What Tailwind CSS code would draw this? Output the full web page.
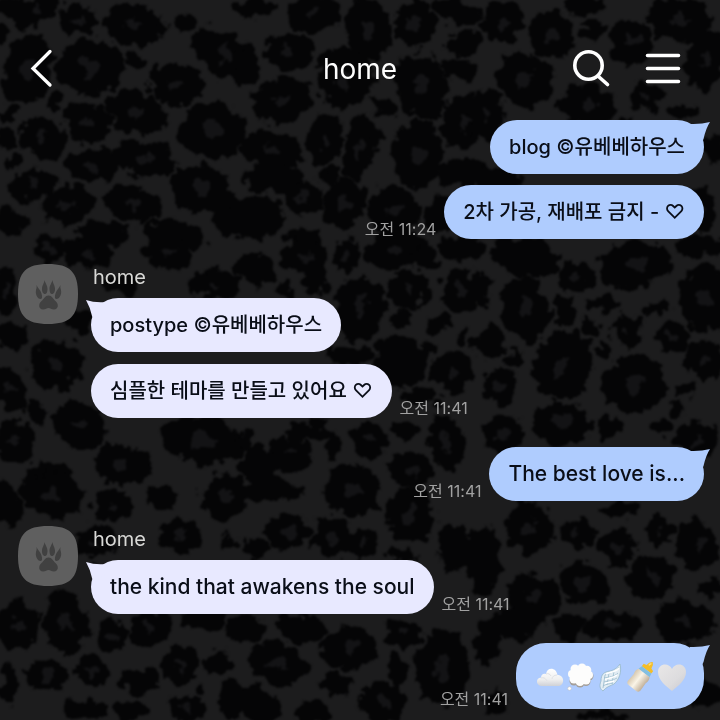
<!DOCTYPE html>
<html lang="ko">
<head>
    <meta charset="UTF-8">
    <meta name="viewport" content="width=device-width, initial-scale=1.0">
    <title>home</title>
    <script src="https://cdn.jsdelivr.net/npm/@tailwindcss/browser@4"></script>
</head>
<body class="relative min-h-screen overflow-x-hidden bg-[#1c1c1d] font-['Inter','Noto_Sans_CJK_KR',sans-serif]">
    <!-- Leopard wallpaper -->
    <svg class="absolute inset-0 w-full h-full" viewBox="0 0 720 720" preserveAspectRatio="xMidYMin slice" aria-hidden="true">
        <defs>
            <filter id="rough" x="-5%" y="-5%" width="110%" height="110%" color-interpolation-filters="sRGB">
                <feTurbulence type="fractalNoise" baseFrequency="0.08" numOctaves="3" seed="4" result="n"/>
                <feDisplacementMap in="SourceGraphic" in2="n" scale="20" xChannelSelector="R" yChannelSelector="G"/>
                <feGaussianBlur stdDeviation="1"/>
            </filter>
        </defs>
        <g id="spots" filter="url(#rough)"></g>
    </svg>

    <div class="relative">
        <!-- Header -->
        <header class="grid grid-cols-[1fr_auto_1fr] items-center h-[120px] pt-[18px] px-[22px] text-white">
            <button aria-label="Back" class="w-10 h-10">
                <svg viewBox="0 0 40 40" fill="none" stroke="currentColor" stroke-width="3.3" stroke-linecap="round"><path d="M28 2.500L11 19.500L28 36"/></svg>
            </button>
            <h1 class="text-[28px] leading-9">home</h1>
            <div class="flex justify-end gap-8 mr-[15px]">
                <button aria-label="Search" class="w-10 h-10">
                    <svg viewBox="0 0 40 40" fill="none" stroke="currentColor" stroke-width="3.6" stroke-linecap="round"><circle cx="17.5" cy="16.500" r="13.700"/><path d="M27.500 27.500L36.500 35.500"/></svg>
                </button>
                <button aria-label="Menu" class="w-10 h-10">
                    <svg viewBox="0 0 40 40" fill="none" stroke="currentColor" stroke-width="3.6" stroke-linecap="round"><path d="M4.500 6.500H35.500M4.500 19.500H35.500M4.500 32.500H35.500"/></svg>
                </button>
            </div>
        </header>

        <main class="pl-[18px] pr-4 pb-[10px]">
            <!-- Sent -->
            <section class="flex flex-col items-end gap-[11px]">
                <div class="relative h-[54px] px-[19px] flex items-center rounded-[27px] bg-[#afccfe] text-[#0a0e18]">
                    <svg class="absolute top-0 -right-[6px] w-[26px] h-6" viewBox="0 0 26 24" fill="#afccfe"><path d="M6 4Q17 4.500 26 2Q22 8 19.500 19L18 22L6 14Z"/></svg>
                    <p class="relative text-xl leading-7 font-medium">blog ©유베베하우스</p>
                </div>
                <div class="flex items-end gap-2">
                    <time class="text-base leading-5 text-[#a1a1a1]">오전 11:24</time>
                    <div class="h-[54px] px-[19px] flex items-center rounded-[27px] bg-[#afccfe] text-[#0a0e18]">
                        <p class="text-xl leading-7 font-medium">2차 가공, 재배포 금지 - ♡</p>
                    </div>
                </div>
            </section>

            <!-- Received -->
            <section class="flex gap-[13px] mt-[25px]">
                <svg class="w-[60px] h-[60px] shrink-0" viewBox="0 0 60 60" role="img" aria-label="Profile">
                    <path d="M30 0C52 0 60 8 60 30S52 60 30 60S0 52 0 30S8 0 30 0Z" fill="#5f5f5f"/>
                    <g id="paw" fill="#414141">
                        <path d="M26.500 16C27 19 29.500 21 29.500 25C29.500 28 28.500 30 27 30C25 30 23.800 27.500 24 24.500C24.200 21 26 20 26.500 16Z"/>
                        <path d="M34.500 16C34 19 31.500 21 31.500 25C31.500 28 32.500 30 34 30C36 30 37.200 27.500 37 24.500C36.800 21 35 20 34.500 16Z"/>
                        <path d="M18.500 21C19.500 24 22.500 26 23.500 29.500C24.500 33 24.300 35 22.500 35C20 35 17.800 31.500 17.800 28C17.800 25 19.200 24 18.500 21Z"/>
                        <path d="M42.500 21C41.500 24 38.500 26 37.500 29.500C36.500 33 36.700 35 38.500 35C41 35 43.200 31.500 43.200 28C43.200 25 41.800 24 42.500 21Z"/>
                        <path d="M30.500 31.500C34 31.500 35 35 37.500 37C41 40 40.500 45.500 36 45.500C33 45.500 32.500 44 30.500 44C28.500 44 28 45.500 25 45.500C20.500 45.500 20 40 23.500 37C26 35 27 31.500 30.500 31.500Z"/>
                    </g>
                </svg>
                <div class="flex flex-col items-start">
                    <h2 class="text-xl leading-[26px] h-[34px] px-[2px] text-[#d8d8d6]">home</h2>
                    <div class="relative h-[54px] px-[19px] flex items-center rounded-[27px] bg-[#e8e9ff] text-[#0a0e18]">
                        <svg class="absolute top-0 -left-[5px] w-[26px] h-6" viewBox="0 0 26 24" fill="#e8e9ff"><path d="M0 2Q9 5 20 4L20 14L8 22L6 18Q4 9 0 2Z"/></svg>
                        <p class="relative text-xl leading-7 font-medium">postype ©유베베하우스</p>
                    </div>
                    <div class="flex items-end gap-2 mt-3">
                        <div class="h-[54px] px-[19px] flex items-center rounded-[27px] bg-[#e8e9ff] text-[#0a0e18]">
                            <p class="text-xl leading-7 font-medium">심플한 테마를 만들고 있어요 ♡</p>
                        </div>
                        <time class="text-base leading-5 text-[#a1a1a1]">오전 11:41</time>
                    </div>
                </div>
            </section>

            <!-- Sent -->
            <section class="flex justify-end items-end gap-2 mt-[29px]">
                <time class="text-base leading-5 text-[#a1a1a1]">오전 11:41</time>
                <div class="relative h-[54px] px-[19px] flex items-center rounded-[27px] bg-[#afccfe] text-[#0a0e18]">
                    <svg class="absolute top-0 -right-[6px] w-[26px] h-6" viewBox="0 0 26 24" fill="#afccfe"><path d="M6 4Q17 4.500 26 2Q22 8 19.500 19L18 22L6 14Z"/></svg>
                    <p class="relative text-[21px] leading-7 font-medium">The best love is...</p>
                </div>
            </section>

            <!-- Received -->
            <section class="flex gap-[13px] mt-[25px]">
                <svg class="w-[60px] h-[60px] shrink-0" viewBox="0 0 60 60" role="img" aria-label="Profile">
                    <path d="M30 0C52 0 60 8 60 30S52 60 30 60S0 52 0 30S8 0 30 0Z" fill="#5f5f5f"/>
                    <use href="#paw"/>
                </svg>
                <div class="flex flex-col items-start">
                    <h2 class="text-xl leading-[26px] h-[34px] px-[2px] text-[#d8d8d6]">home</h2>
                    <div class="flex items-end gap-2">
                        <div class="relative h-[54px] px-[19px] flex items-center rounded-[27px] bg-[#e8e9ff] text-[#0a0e18]">
                            <svg class="absolute top-0 -left-[5px] w-[26px] h-6" viewBox="0 0 26 24" fill="#e8e9ff"><path d="M0 2Q9 5 20 4L20 14L8 22L6 18Q4 9 0 2Z"/></svg>
                            <p class="relative text-[21px] leading-7 font-medium">the kind that awakens the soul</p>
                        </div>
                        <time class="text-base leading-5 text-[#a1a1a1]">오전 11:41</time>
                    </div>
                </div>
            </section>

            <!-- Sent, emoji -->
            <section class="flex justify-end items-end gap-2 mt-[29px]">
                <time class="text-base leading-5 text-[#a1a1a1]">오전 11:41</time>
                <div class="relative h-[66px] px-[19px] flex items-center rounded-[30px] bg-[#afccfe]">
                    <svg class="absolute top-0 -right-[6px] w-[26px] h-6" viewBox="0 0 26 24" fill="#afccfe"><path d="M6 4Q17 4.500 26 2Q22 8 19.500 19L18 22L6 14Z"/></svg>
                    <div class="relative flex">
                        <svg class="w-[30px] h-[30px] overflow-visible" viewBox="0 0 30 30" role="img" aria-label="cloud">
                            <defs>
                                <linearGradient id="cloud" x1="0" y1="0" x2="0" y2="1"><stop offset="0" stop-color="#fff"/><stop offset=".6" stop-color="#f0f0f0"/><stop offset="1" stop-color="#cfd1d6"/></linearGradient>
                            </defs>
                            <path d="M7 25C1 25 0 17 6 16.500C6 13 9 12 11 13C12 6 21 6 22.500 14C30 14 30 25 23 25Z" fill="url(#cloud)"/>
                            <path d="M6 17C9 16 11 18 12 20M11 13C13 12 15 13 16 15M22 14C19 14 17 16 17 18" fill="none" stroke="#e0e1e4"/>
                        </svg>
                        <svg class="w-[30px] h-[30px] overflow-visible" viewBox="0 0 30 30" role="img" aria-label="thought">
                            <g fill="#a59f98"><circle cx="9" cy="20" r="4.500"/><circle cx="15" cy="22" r="4.500"/><circle cx="21" cy="20.500" r="4.500"/><circle cx="24" cy="15" r="4.500"/></g>
                            <g fill="#fdfdfc"><circle cx="10" cy="8" r="4.500"/><circle cx="17" cy="7" r="4.500"/><circle cx="22" cy="9" r="4.300"/><circle cx="7" cy="13" r="4"/><circle cx="24" cy="14" r="4"/><circle cx="9" cy="18" r="4.500"/><circle cx="15" cy="20.500" r="4.500"/><circle cx="21" cy="19" r="4.500"/><circle cx="15" cy="14" r="8"/></g>
                            <circle cx="4.500" cy="27.500" r="1.800" fill="#fff" stroke="#c6c1ba" stroke-width=".5"/>
                        </svg>
                        <svg class="w-[30px] h-[30px] overflow-visible" viewBox="0 0 30 30" role="img" aria-label="wing">
                            <path d="M25 3C27 11 24 19 19 23C15 25 11 26 8 30C5 28 4 25 6 20C6 13 9 11 15 10C20 9 23 6 25 3Z" fill="#e3edf4" stroke="#94b7c9" stroke-width=".8"/>
                            <path d="M24 6C20 12 13 12 10 14L8 27M23 12C19 16 14 16 9 17M22 17C17 20 13 20 9 21M18 22C14 23 11 23 8 25M19 10L17 23M14 12L12 24" fill="none" stroke="#94b7c9" stroke-width=".7"/>
                            <path d="M24 7C21 11 16 11 11 13M22 14C18 17 14 17 10 18.500M19 20C16 21 13 21 10 22.500" fill="none" stroke="#fff" stroke-width="1.500"/>
                        </svg>
                        <svg class="w-[30px] h-[30px] overflow-visible" viewBox="0 0 30 30" role="img" aria-label="baby bottle">
                            <defs>
                                <linearGradient id="milk" x1="0" y1="0" x2="1" y2="0"><stop offset="0" stop-color="#d6c7ae"/><stop offset=".45" stop-color="#faf4e7"/><stop offset="1" stop-color="#bfae98"/></linearGradient>
                            </defs>
                            <g transform="rotate(38 16 16)">
                                <path d="M13 3Q13 -1 16 -3Q19 -1 19 3L22 4V7H10V4Z" fill="#f5bd27"/>
                                <path d="M15 2Q15 0 16 -1" stroke="#ffe27a" stroke-width="1.300" fill="none"/>
                                <path d="M10 7H22L23 11H9Z" fill="#83bfe0"/>
                                <path d="M9 11H23Q25 14 23.500 18L24 27Q24 30 20 30H12Q8 30 8 27L8.500 18Q7 14 9 11Z" fill="url(#milk)"/>
                            </g>
                        </svg>
                        <svg class="w-[30px] h-[30px] overflow-visible" viewBox="0 0 30 30" role="img" aria-label="white heart">
                            <defs>
                                <linearGradient id="heart" x1="0" y1="0" x2="1" y2="1"><stop offset="0" stop-color="#e9e7e7"/><stop offset=".6" stop-color="#dddcde"/><stop offset="1" stop-color="#c9c9cf"/></linearGradient>
                            </defs>
                            <path d="M17 30C11 25 3 19 3 11C3 2 14 1 17 8C20 1 31 2 31 11C31 19 23 25 17 30Z" fill="url(#heart)"/>
                        </svg>
                    </div>
                </div>
            </section>
        </main>
    </div>

    <script>
        // Leopard spots: x, y, rx, ry, rotation, 1 = lighter centre
        const spots = [
            [37,10,24,13,-25,1],[78,20,19,14,0,1],[133,25,28,19,10,1],[185,22,10,8,0,0],[162,31,6,6,0,0],[225,55,36,20,35,1],[8,8,10,10,0,0],[27,70,23,34,15,1],[90,67,31,26,0,1],[136,60,10,5,0,0],
            [176,84,26,19,10,1],[54,102,9,6,-20,0],[136,112,28,20,20,1],[87,123,24,18,20,1],[8,115,8,7,0,0],[43,138,22,18,30,1],[7,140,9,10,0,0],[212,131,31,26,10,1],[144,158,30,17,10,1],[92,166,27,15,0,1],
            [14,163,6,7,0,0],[33,185,24,14,-10,1],[200,188,29,22,15,1],[68,205,25,17,-10,1],[134,204,27,17,15,1],[10,222,16,10,20,0],[103,234,26,13,0,0],[175,235,30,12,10,0],[232,218,15,20,0,0],[0,33,5,10,0,0],
            [255,8,18,9,0,0],[314,14,25,17,0,1],[368,28,21,29,-15,1],[415,24,19,22,0,1],[457,12,24,11,20,0],[289,52,25,17,0,1],[465,45,18,11,0,0],[460,70,17,10,20,0],[345,78,26,29,0,1],[422,85,24,32,-20,1],
            [282,100,29,21,-15,1],[382,106,14,8,20,0],[463,122,19,26,0,1],[325,140,16,24,10,1],[272,150,30,18,10,1],[274,178,28,14,0,0],[359,148,15,30,15,1],[379,138,5,7,0,0],[418,155,24,32,0,1],[463,172,22,14,0,0],
            [330,175,10,7,-10,0],[303,198,17,16,0,1],[343,204,20,24,10,1],[393,210,25,22,10,1],[256,216,26,20,10,0],[302,237,15,8,0,0],[240,65,6,20,0,0],[440,215,16,18,0,0],
            [503,22,20,18,0,1],[551,35,21,22,0,1],[592,30,12,8,-10,0],[585,5,18,9,0,0],[632,42,22,20,30,1],[680,20,30,20,10,1],[525,80,28,24,20,1],[588,106,27,20,15,1],[622,130,12,7,0,0],[645,97,15,13,0,1],[684,112,14,8,0,0],
            [705,60,18,26,10,1],[486,115,16,24,0,1],[712,150,10,12,0,0],[700,210,16,20,0,1],[500,180,24,10,0,0],
            [50,250,16,13,0,1],[88,254,22,14,10,1],[168,254,26,14,10,1],[6,290,12,22,0,1],[120,285,16,10,0,0],[215,284,24,14,0,1],[55,365,26,23,-10,1],[10,388,15,22,-20,1],[35,412,11,11,0,0],[80,425,27,22,20,1],[15,442,17,20,-20,1],
            [122,465,28,18,10,1],[202,440,38,22,10,1],[80,322,12,14,0,0],[50,474,20,10,0,0],[12,335,16,12,0,0],
            [256,270,20,15,20,0],[305,256,22,16,0,1],[346,256,12,18,10,1],[395,250,28,17,-10,1],[426,256,11,10,0,0],[462,248,22,12,0,0],[284,291,9,7,0,0],[316,282,11,12,0,0],[360,308,24,30,15,1],[408,290,19,18,0,1],[402,320,10,9,0,0],
            [440,324,12,8,-15,0],[462,290,19,20,0,1],[462,340,6,7,0,0],[350,355,20,9,0,0],[400,362,26,24,15,0],[430,348,7,6,0,0],[453,372,19,18,0,1],[420,397,18,8,0,0],[310,432,24,9,0,0],[290,455,22,15,10,1],[369,440,18,16,0,1],
            [405,430,12,9,0,0],[447,443,17,24,-10,1],[334,447,6,12,10,0],[258,466,17,18,0,0],[410,470,22,14,10,1],[245,440,8,10,0,0],[345,474,14,8,0,0],
            [525,257,32,18,15,0],[576,278,19,14,0,1],[635,265,34,22,-10,1],[700,246,22,10,0,0],[525,308,22,30,-15,1],[565,311,12,13,0,0],[603,303,17,7,0,0],[655,308,16,6,-10,0],[591,327,9,7,20,0],[627,330,15,14,0,1],[674,338,16,15,0,1],
            [705,298,26,30,0,1],[490,343,15,15,0,0],[515,358,9,8,0,0],[563,365,28,32,20,1],[604,350,6,5,0,0],[500,386,17,17,30,1],[634,384,30,27,-10,1],[705,360,19,17,0,1],[685,388,9,8,0,0],[677,410,8,8,0,0],[561,423,28,20,10,1],
            [503,435,19,18,10,1],[610,427,13,10,10,0],[660,427,10,8,0,0],[698,440,22,15,0,1],[484,290,5,14,0,0],
            [8,505,13,22,-20,0],[53,495,30,20,10,1],[113,505,20,14,0,1],[162,497,17,11,20,0],[225,497,22,22,20,1],[95,542,18,16,0,1],[180,535,21,15,10,1],[228,542,8,6,-20,0],[18,625,21,23,0,1],[66,622,21,30,-10,1],[112,636,15,15,0,1],
            [150,628,20,18,0,1],[205,620,20,12,0,0],[10,685,8,18,0,0],[47,675,20,15,10,1],[92,672,16,13,0,1],[140,680,19,12,0,0],[180,664,18,18,0,1],[218,662,13,11,0,0],[200,690,7,5,0,0],[85,710,20,10,0,0],[132,712,17,8,0,0],
            [187,708,20,12,10,1],[232,700,12,18,0,0],[270,490,28,11,0,0],[352,490,26,24,10,1],[287,532,21,16,0,1],[332,537,19,18,0,1],[362,543,17,15,0,1],[410,515,23,27,-10,1],[255,550,14,10,0,0],[455,548,16,24,0,0],[400,556,16,6,0,0],
            [245,630,18,12,0,0],[300,628,24,14,10,0],[277,664,28,20,15,1],[350,648,25,20,-10,1],[403,632,18,13,0,1],[397,670,9,13,0,0],[442,668,25,36,0,1],[335,684,13,10,20,0],[258,706,24,16,30,0],[383,702,21,20,0,1],[312,712,18,9,0,0],
            [530,528,22,24,-20,1],[577,534,16,14,0,1],[617,547,19,16,0,1],[618,510,18,7,0,0],[660,530,14,12,0,1],[698,545,20,24,-20,1],[584,583,24,19,20,1],[651,577,22,20,10,1],[483,560,16,32,0,0],[533,598,26,22,30,1],[518,622,22,16,0,0],
            [568,627,14,13,-20,0],[612,625,27,14,0,1],[685,622,28,20,0,1],[710,588,12,10,0,0],[488,642,12,22,10,0],[495,704,10,14,0,0],[602,716,20,5,0,0],[705,695,14,14,0,0]
        ];

        document.getElementById('spots').innerHTML = spots.map(([x, y, rx, ry, r, c]) => `
            <g transform="translate(${x} ${y}) rotate(${r})">
                <ellipse rx="${rx * 1.06}" ry="${ry * 1.08}" fill="#050506"/>
                ${c ? `<ellipse rx="${rx * 0.28}" ry="${ry * 0.32}" fill="#131315"/>` : ''}
            </g>
        `).join('');
    </script>
</body>
</html>
